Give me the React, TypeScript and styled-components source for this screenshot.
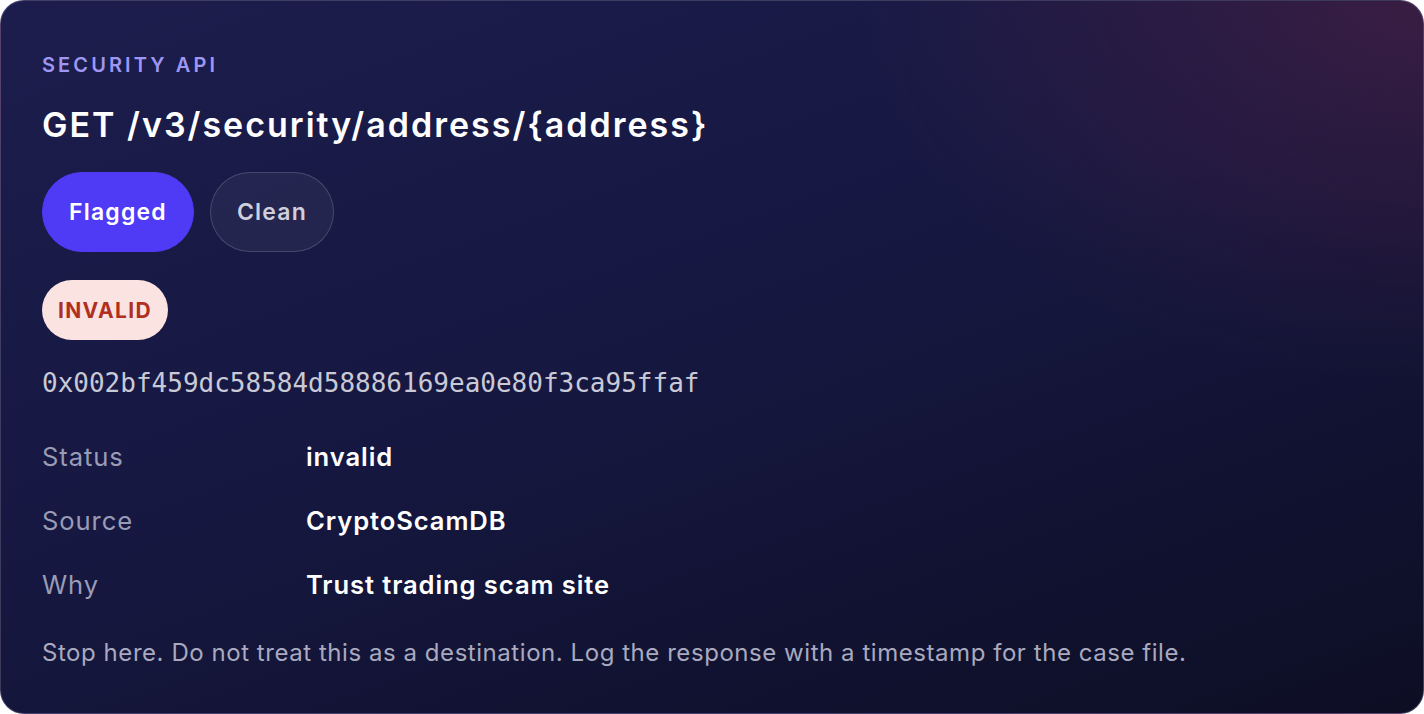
import React from "react";
import styled, { createGlobalStyle } from "styled-components";

const Global = createGlobalStyle`
  html, body { margin: 0; padding: 0; background: #ffffff; }
  * { box-sizing: border-box; }
`;

const SANS = `Inter, "Open Sans", "Noto Sans", sans-serif`;

const Card = styled.section`
  width: 1424px;
  height: 714px;
  border-radius: 24px;
  border: 1px solid rgba(150, 140, 190, 0.35);
  background:
    radial-gradient(ellipse 560px 380px at 100% 0%, rgba(105, 35, 65, 0.42), rgba(105, 35, 65, 0) 100%),
    linear-gradient(160deg, #1c1d4c 0%, #161842 45%, #0d0e24 100%);
  padding: 52px 41px 0 41px;
  display: flex;
  flex-direction: column;
  align-items: flex-start;
  font-family: ${SANS};
  overflow: hidden;
`;

const Eyebrow = styled.div`
  font-size: 20px;
  line-height: 24px;
  font-weight: 600;
  letter-spacing: 3.1px;
  color: #9d96f2;
  text-transform: uppercase;
`;

const Title = styled.h1`
  margin: 26px 0 0 0;
  font-size: 34px;
  line-height: 44px;
  font-weight: 600;
  color: #ffffff;
  letter-spacing: 2px;
`;

const Toggle = styled.div`
  margin-top: 25px;
  display: flex;
  gap: 16px;
`;

const Pill = styled.button<{ $active?: boolean }>`
  height: 80px;
  padding: 0 26px;
  border-radius: 40px;
  font-family: ${SANS};
  font-size: 23px;
  font-weight: 600;
  letter-spacing: 1.2px;
  cursor: pointer;
  color: ${(p) => (p.$active ? "#ffffff" : "#cfd0dc")};
  background: ${(p) => (p.$active ? "#4f3bf5" : "rgba(255,255,255,0.05)")};
  border: 1px solid ${(p) => (p.$active ? "#4f3bf5" : "rgba(255,255,255,0.16)")};
`;

const Badge = styled.span`
  margin-top: 28px;
  height: 60px;
  padding: 0 16px;
  display: inline-flex;
  align-items: center;
  border-radius: 30px;
  background: #fbe3e2;
  color: #b0301f;
  font-size: 21px;
  font-weight: 700;
  letter-spacing: 1.35px;
`;

const Address = styled.div`
  margin-top: 27px;
  font-family: "DejaVu Sans Mono", "Liberation Mono", monospace;
  font-size: 26px;
  line-height: 32px;
  color: #c9cad6;
`;

const Rows = styled.dl`
  margin: 25px 0 0 0;
  display: flex;
  flex-direction: column;
  width: 100%;
`;

const Row = styled.div`
  display: grid;
  grid-template-columns: 264px 1fr;
  height: 64px;
  align-items: center;
`;

const Label = styled.dt`
  font-size: 25.6px;
  letter-spacing: 0.9px;
  color: #9a9cb6;
  font-weight: 400;
`;

const Value = styled.dd`
  margin: 0;
  font-size: 25.6px;
  letter-spacing: 0.9px;
  color: #ffffff;
  font-weight: 600;
`;

const Note = styled.p`
  margin: 21px 0 0 0;
  font-size: 24px;
  letter-spacing: 0.55px;
  line-height: 32px;
  color: #a9a9bf;
`;

export default function App() {
  return (
    <>
      <Global />
      <Card>
        <Eyebrow>Security API</Eyebrow>
        <Title>GET /v3/security/address/{"{address}"}</Title>
        <Toggle>
          <Pill $active>Flagged</Pill>
          <Pill>Clean</Pill>
        </Toggle>
        <Badge>INVALID</Badge>
        <Address>0x002bf459dc58584d58886169ea0e80f3ca95ffaf</Address>
        <Rows>
          <Row>
            <Label>Status</Label>
            <Value>invalid</Value>
          </Row>
          <Row>
            <Label>Source</Label>
            <Value>CryptoScamDB</Value>
          </Row>
          <Row>
            <Label>Why</Label>
            <Value>Trust trading scam site</Value>
          </Row>
        </Rows>
        <Note>
          Stop here. Do not treat this as a destination. Log the response with a timestamp for the case file.
        </Note>
      </Card>
    </>
  );
}
